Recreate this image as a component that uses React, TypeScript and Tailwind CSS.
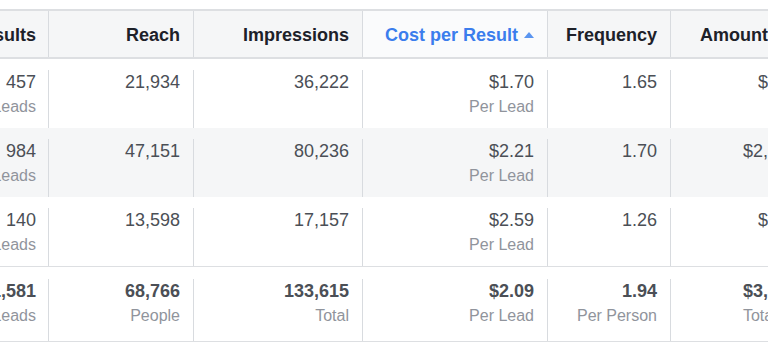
import React from "react";

type Row = {
  results: string;
  reach: string;
  impressions: string;
  cost: string;
  frequency: string;
  amount: string;
};

const rows: Row[] = [
  { results: "457", reach: "21,934", impressions: "36,222", cost: "$1.70", frequency: "1.65", amount: "$776.90" },
  { results: "984", reach: "47,151", impressions: "80,236", cost: "$2.21", frequency: "1.70", amount: "$2,174.64" },
  { results: "140", reach: "13,598", impressions: "17,157", cost: "$2.59", frequency: "1.26", amount: "$362.60" },
];

const cols = "grid grid-cols-[120px_145px_169px_185px_123px_166px]";
const cell = "border-l border-[#d8dbdf] pr-[13px] text-right";

function Cell({ value, sub, first, bold }: { value: string; sub?: string; first?: boolean; bold?: boolean }) {
  return (
    <div className={first ? "pr-3 text-right" : cell}>
      <div className={`text-[18px] leading-6 text-[#4b4f56] ${bold ? "font-bold" : ""}`}>{value}</div>
      {sub && <div className="pt-px text-[16px] leading-6 text-[#90949c]">{sub}</div>}
    </div>
  );
}

export default function App() {
  return (
    <div className="h-[358px] w-[768px] overflow-hidden bg-white pt-[9px] font-['Liberation_Sans',Arial,sans-serif]">
      <div className="ml-[-72px] w-[908px]">
        {/* header */}
        <div className={`${cols} h-[50px] border-y-2 border-[#dddfe2] bg-[#f5f6f7] text-[18px] font-bold leading-6 text-[#1d2129]`}>
          <div className="pr-3 pt-[12px] text-right">Results</div>
          <div className={`${cell} pt-[12px]`}>Reach</div>
          <div className={`${cell} pt-[12px]`}>Impressions</div>
          <div className={`${cell} flex items-start justify-end gap-[6px] bg-[#fafbfc] pt-[12px] text-[#3b7ded]`}>
            <span>Cost per Result</span>
            <svg width="10" height="6" viewBox="0 0 10 6" className="mt-[9px]">
              <path d="M5 0L10 6H0Z" fill="#5a95f0" />
            </svg>
          </div>
          <div className={`${cell} pt-[12px]`}>Frequency</div>
          <div className={`${cell} whitespace-nowrap pt-[12px]`}>Amount Spent</div>
        </div>

        {/* body rows */}
        {rows.map((r, i) => (
          <div key={r.reach} className={`${cols} h-[69px] pt-[11px] ${i === 1 ? "bg-[#f5f6f7]" : "bg-white"}`}>
            <Cell first value={r.results} sub="Leads" />
            <Cell value={r.reach} />
            <Cell value={r.impressions} />
            <Cell value={r.cost} sub="Per Lead" />
            <Cell value={r.frequency} />
            <Cell value={r.amount} />
          </div>
        ))}

        {/* total row */}
        <div className={`${cols} h-[76px] border-y border-[#dddfe2] pt-[12px]`}>
          <Cell first bold value="1,581" sub="Leads" />
          <Cell bold value="68,766" sub="People" />
          <Cell bold value="133,615" sub="Total" />
          <Cell bold value="$2.09" sub="Per Lead" />
          <Cell bold value="1.94" sub="Per Person" />
          <Cell bold value="$3,314.14" sub="Total Spent" />
        </div>
      </div>
    </div>
  );
}
